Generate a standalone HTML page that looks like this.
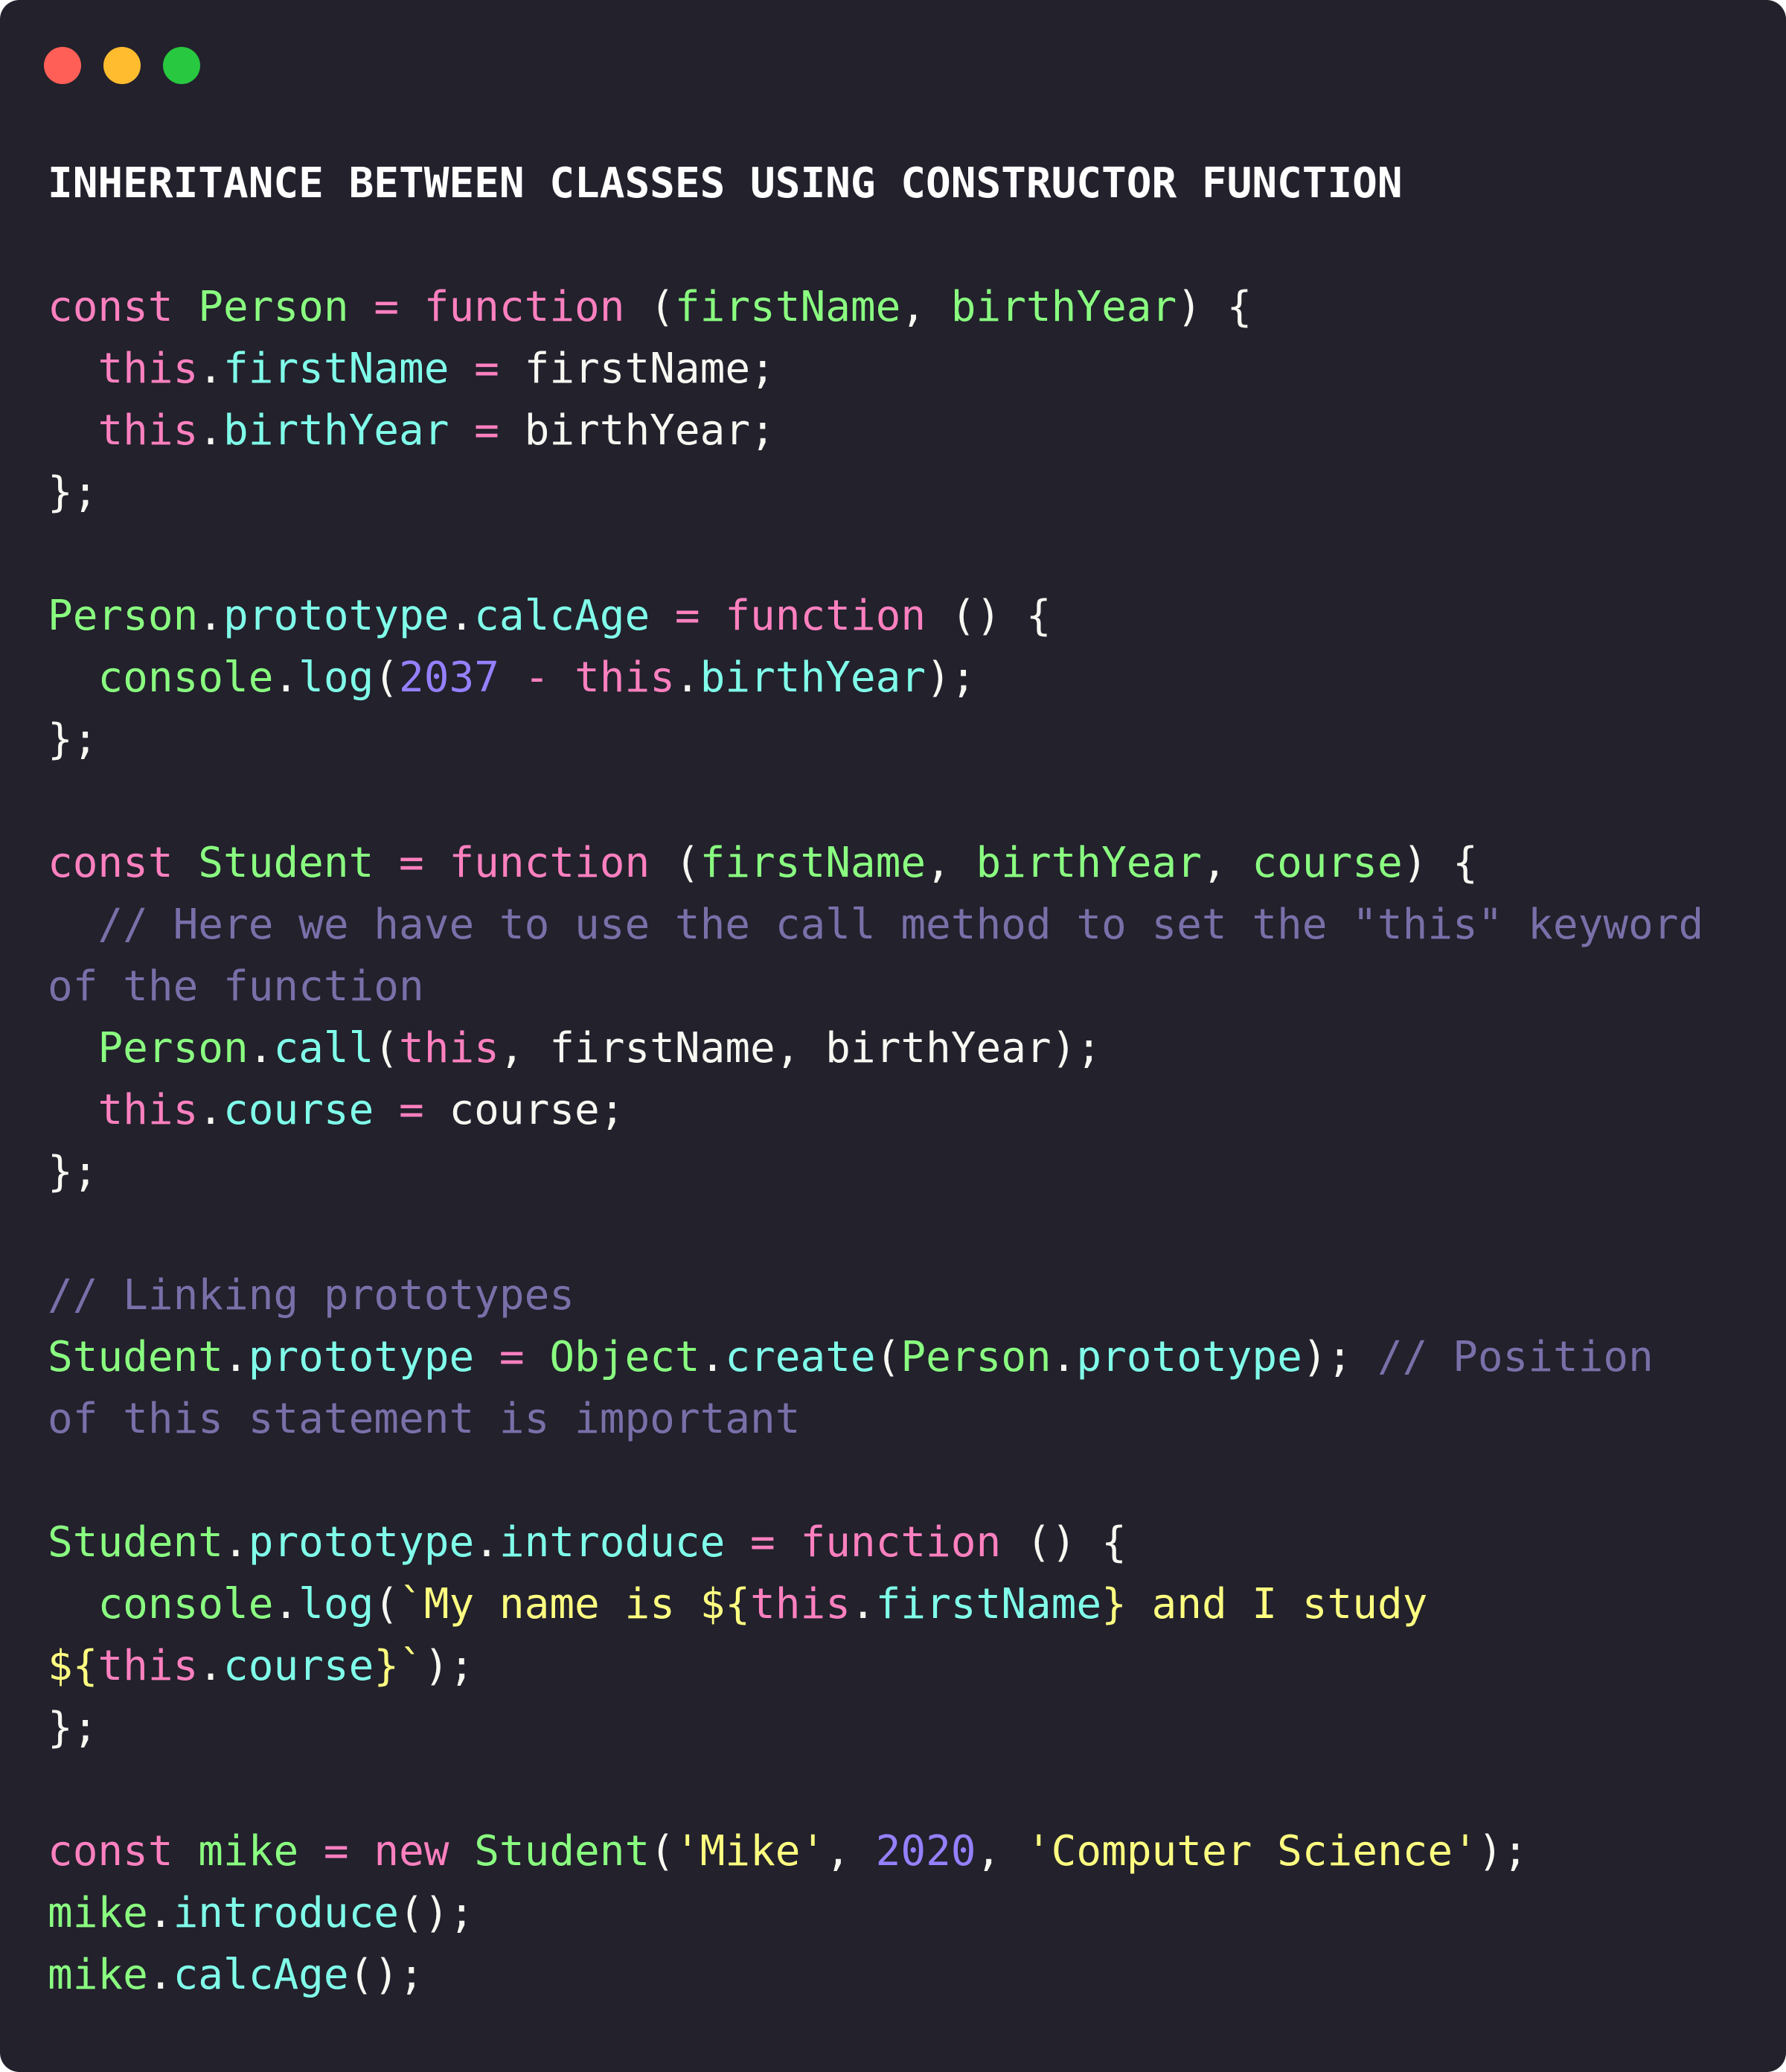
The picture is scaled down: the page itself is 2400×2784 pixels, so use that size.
<!DOCTYPE html>
<html><head><meta charset="utf-8"><style>
html,body{margin:0;padding:0;background:#fff;width:2400px;height:2784px;overflow:hidden}
.card{position:absolute;left:0;top:0;width:2400px;height:2784px;background:#22212c;border-radius:26px}
.dot{position:absolute;top:63px;width:50px;height:50px;border-radius:50%}
pre{position:absolute;left:64px;top:205px;margin:0;font-family:"DejaVu Sans Mono","Liberation Mono",monospace;font-size:56px;line-height:83px;color:#f8f8f2}
.t{font-weight:bold;color:#fff}
.k{color:#ff80bf}.g{color:#8aff80}.c{color:#80ffea}.p{color:#9580ff}.y{color:#ffff80}.m{color:#7970a9}
</style></head><body><div class="card">
<div class="dot" style="left:59px;background:#ff5f57"></div>
<div class="dot" style="left:139px;background:#febc2e"></div>
<div class="dot" style="left:219px;background:#28c840"></div>
<pre><span class="t">INHERITANCE BETWEEN CLASSES USING CONSTRUCTOR FUNCTION</span>

<span class="k">const</span> <span class="g">Person</span> <span class="k">=</span> <span class="k">function</span> (<span class="g">firstName</span>, <span class="g">birthYear</span>) {
  <span class="k">this</span>.<span class="c">firstName</span> <span class="k">=</span> firstName;
  <span class="k">this</span>.<span class="c">birthYear</span> <span class="k">=</span> birthYear;
};

<span class="g">Person</span>.<span class="c">prototype</span>.<span class="c">calcAge</span> <span class="k">=</span> <span class="k">function</span> () {
  <span class="g">console</span>.<span class="c">log</span>(<span class="p">2037</span> <span class="k">-</span> <span class="k">this</span>.<span class="c">birthYear</span>);
};

<span class="k">const</span> <span class="g">Student</span> <span class="k">=</span> <span class="k">function</span> (<span class="g">firstName</span>, <span class="g">birthYear</span>, <span class="g">course</span>) {
  <span class="m">// Here we have to use the call method to set the "this" keyword</span>
<span class="m">of the function</span>
  <span class="g">Person</span>.<span class="c">call</span>(<span class="k">this</span>, firstName, birthYear);
  <span class="k">this</span>.<span class="c">course</span> <span class="k">=</span> course;
};

<span class="m">// Linking prototypes</span>
<span class="g">Student</span>.<span class="c">prototype</span> <span class="k">=</span> <span class="g">Object</span>.<span class="c">create</span>(<span class="g">Person</span>.<span class="c">prototype</span>); <span class="m">// Position</span>
<span class="m">of this statement is important</span>

<span class="g">Student</span>.<span class="c">prototype</span>.<span class="c">introduce</span> <span class="k">=</span> <span class="k">function</span> () {
  <span class="g">console</span>.<span class="c">log</span>(<span class="y">`My name is ${</span><span class="k">this</span>.<span class="c">firstName</span><span class="y">} and I study</span>
<span class="y">${</span><span class="k">this</span>.<span class="c">course</span><span class="y">}`</span>);
};

<span class="k">const</span> <span class="g">mike</span> <span class="k">=</span> <span class="k">new</span> <span class="g">Student</span>(<span class="y">'Mike'</span>, <span class="p">2020</span>, <span class="y">'Computer Science'</span>);
<span class="g">mike</span>.<span class="c">introduce</span>();
<span class="g">mike</span>.<span class="c">calcAge</span>();</pre>
</div></body></html>
